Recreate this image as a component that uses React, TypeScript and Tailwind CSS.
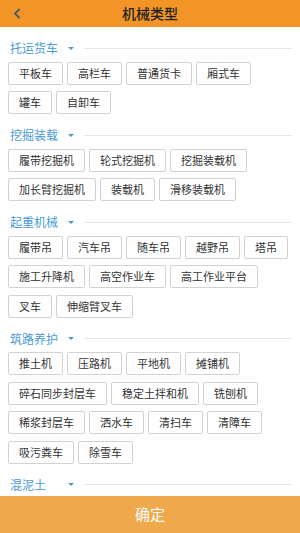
import React from 'react';

const sections: { title: string; items: string[] }[] = [
  { title: '托运货车', items: ['平板车', '高栏车', '普通货卡', '厢式车', '罐车', '自卸车'] },
  { title: '挖掘装载', items: ['履带挖掘机', '轮式挖掘机', '挖掘装载机', '加长臂挖掘机', '装载机', '滑移装载机'] },
  {
    title: '起重机械',
    items: ['履带吊', '汽车吊', '随车吊', '越野吊', '塔吊', '施工升降机', '高空作业车', '高工作业平台', '叉车', '伸缩臂叉车'],
  },
  {
    title: '筑路养护',
    items: ['推土机', '压路机', '平地机', '摊铺机', '碎石同步封层车', '稳定土拌和机', '铣刨机', '稀浆封层车', '洒水车', '清扫车', '清障车', '吸污粪车', '除雪车'],
  },
  { title: '混泥土', items: [] },
];

function Section({ title, items }: { title: string; items: string[] }) {
  return (
    <div className="pt-[13px]">
      <div className="flex items-center h-[16px] pl-[10px] pr-[8px]">
        <span className="w-[58px] text-[12px] leading-[16px] text-[#4a9ad6]">{title}</span>
        <span className="w-0 h-0 border-l-[3px] border-r-[3px] border-t-[3px] border-l-transparent border-r-transparent border-t-[#4a9ad6]" />
        <div className="flex-1 ml-[10px] h-px bg-[#e6e6e6]" />
      </div>
      {items.length > 0 && (
        <div className="flex flex-wrap gap-x-[4px] gap-y-[6.5px] px-[8px] mt-[5.5px]">
          {items.map((it) => (
            <div
              key={it}
              className="h-[23px] px-[10px] flex items-center border border-[#d2d2d2] rounded-[2px] text-[11px] text-[#333] bg-white"
            >
              {it}
            </div>
          ))}
        </div>
      )}
    </div>
  );
}

export default function App() {
  return (
    <div
      className="w-[300px] h-[533px] flex flex-col bg-white overflow-hidden"
      style={{ fontFamily: '"Noto Sans CJK SC", "Noto Sans", sans-serif' }}
    >
      <div className="h-[27px] shrink-0 bg-[#f29526] relative flex items-center justify-center">
        <svg className="absolute left-[13px] top-[8px]" width="8" height="11" viewBox="0 0 8 11">
          <path d="M6.5 1 L2 5.5 L6.5 10" fill="none" stroke="#4b5a6b" strokeWidth="1.8" />
        </svg>
        <span className="text-[14px] text-[#222] font-medium">机械类型</span>
      </div>
      <div className="flex-1 overflow-hidden">
        {sections.map((s) => (
          <Section key={s.title} title={s.title} items={s.items} />
        ))}
      </div>
      <div className="h-[37px] shrink-0 bg-[#efa94a] flex items-center justify-center text-white text-[15px]">
        确定
      </div>
    </div>
  );
}
